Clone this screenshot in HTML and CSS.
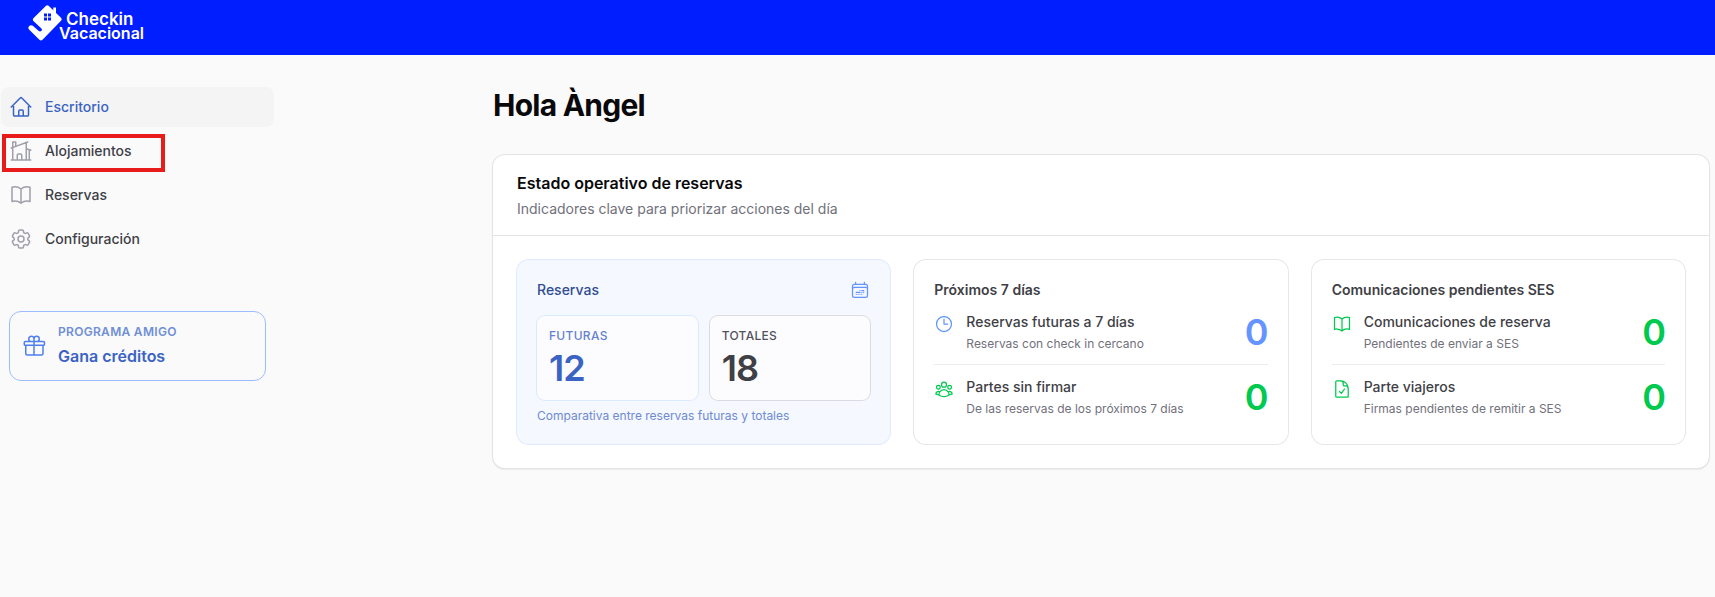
FILE: index.html
```html
<!DOCTYPE html>
<html lang="es">
<head>
  <meta charset="UTF-8">
  <meta name="viewport" content="width=device-width, initial-scale=1">
  <title>Escritorio - Checkin Vacacional</title>
  <link rel="stylesheet" href="styles.css">
</head>
<body>

<header class="topbar">
  <a href="#" class="logo">
    <svg class="logo-mark" viewBox="0 0 36 38" aria-hidden="true">
      <path d="M18 1.8Q19.300.6 20.600 1.800L25.300 6.300V3.500H28V9L33 13.800Q34.300 15.200 33 16.800L14.500 35.800Q13 37.400 11.400 35.800L1 25.600Q-.4 23.600 1.200 22Q3 20.600 4.800 21.800L10.500 26.800Q12 28 13.500 26.800Q14.500 25.600 13.400 24.400L5.400 17Q4.300 15.600 5.400 14.300Z" fill="#fff"/>
      <path d="M16 9.500h3v3h-3zM20 9.500h3v3h-3zM16 13.500h3v3h-3zM20 13.500h3v3h-3z" fill="#001eff"/>
    </svg>
    <span class="logo-text">
      <span class="logo-first">Checkin</span>
      <span>Vacacional</span>
    </span>
  </a>
</header>

<div class="layout">
  <!-- Sidebar -->
  <aside class="sidebar">
    <nav>
      <ul class="menu">
        <li>
          <a href="#" class="menu-item active">
            <svg class="icon" viewBox="0 0 24 24"><path d="m2.250 12 8.954-8.955c.44-.439 1.152-.439 1.591 0L21.750 12M4.500 9.750v10.125c0 .621.504 1.125 1.125 1.125H9.750v-4.875c0-.621.504-1.125 1.125-1.125h2.250c.621 0 1.125.504 1.125 1.125V21h4.125c.621 0 1.125-.504 1.125-1.125V9.750M8.250 21h8.250"/></svg>
            Escritorio
          </a>
        </li>
        <li class="marked">
          <a href="#" class="menu-item">
            <svg class="icon" viewBox="0 0 24 24"><path d="M8.250 21v-4.875c0-.621.504-1.125 1.125-1.125h2.250c.621 0 1.125.504 1.125 1.125V21m0 0h4.500V3.545M12.750 21h7.500V10.750M2.250 21h1.500m18 0h-18M2.250 9l4.500-1.636M18.750 3l-1.500.545m0 6.205 3 1m1.500.5-1.500-.5M6.750 7.364V3h-3v18m3-13.636 10.500-3.819"/></svg>
            Alojamientos
          </a>
        </li>
        <li>
          <a href="#" class="menu-item">
            <svg class="icon" viewBox="0 0 24 24"><path d="M12 6.042A8.967 8.967 0 0 0 6 3.750c-1.052 0-2.062.18-3 .512v14.250A8.987 8.987 0 0 1 6 18c2.305 0 4.408.867 6 2.292m0-14.250a8.966 8.966 0 0 1 6-2.292c1.052 0 2.062.18 3 .512v14.250A8.987 8.987 0 0 0 18 18a8.967 8.967 0 0 0-6 2.292m0-14.250v14.250"/></svg>
            Reservas
          </a>
        </li>
        <li>
          <a href="#" class="menu-item">
            <svg class="icon" viewBox="0 0 24 24"><path d="M9.594 3.940c.09-.542.56-.94 1.110-.94h2.593c.55 0 1.020.398 1.110.94l.213 1.281c.063.374.313.686.645.87.074.04.147.083.22.127.325.196.72.257 1.075.124l1.217-.456a1.125 1.125 0 0 1 1.370.49l1.296 2.247a1.125 1.125 0 0 1-.26 1.431l-1.003.827c-.293.241-.438.613-.43.992a7.723 7.723 0 0 1 0 .255c-.008.378.137.75.43.991l1.004.827c.424.35.534.955.26 1.430l-1.298 2.247a1.125 1.125 0 0 1-1.369.491l-1.217-.456c-.355-.133-.75-.072-1.076.124a6.470 6.470 0 0 1-.22.128c-.331.183-.581.495-.644.869l-.213 1.281c-.09.543-.56.940-1.110.940h-2.594c-.55 0-1.019-.398-1.110-.94l-.213-1.281c-.062-.374-.312-.686-.644-.87a6.520 6.520 0 0 1-.22-.127c-.325-.196-.72-.257-1.076-.124l-1.217.456a1.125 1.125 0 0 1-1.369-.49l-1.297-2.247a1.125 1.125 0 0 1 .26-1.431l1.004-.827c.292-.24.437-.613.430-.991a6.932 6.932 0 0 1 0-.255c.007-.380-.138-.751-.430-.992l-1.004-.827a1.125 1.125 0 0 1-.26-1.430l1.297-2.247a1.125 1.125 0 0 1 1.370-.491l1.216.456c.356.133.751.072 1.076-.124.072-.044.146-.086.220-.128.332-.183.582-.495.644-.869l.214-1.280Z"/><path d="M15 12a3 3 0 1 1-6 0 3 3 0 0 1 6 0Z"/></svg>
            Configuración
          </a>
        </li>
      </ul>
    </nav>

    <a href="#" class="promo">
      <svg class="icon" viewBox="0 0 24 24"><path d="M21 11.250v8.250a1.500 1.500 0 0 1-1.500 1.500H5.250a1.500 1.500 0 0 1-1.500-1.500v-8.250M12 4.875A2.625 2.625 0 1 0 9.375 7.500H12m0-2.625V7.500m0-2.625A2.625 2.625 0 1 1 14.625 7.500H12m0 0V21m-8.625-9.750h18c.621 0 1.125-.504 1.125-1.125v-1.500c0-.621-.504-1.125-1.125-1.125h-18c-.621 0-1.125.504-1.125 1.125v1.500c0 .621.504 1.125 1.125 1.125Z"/></svg>
      <span class="promo-text">
        <span class="promo-label">PROGRAMA AMIGO</span>
        <span class="promo-title">Gana créditos</span>
      </span>
    </a>
  </aside>

  <!-- Main content -->
  <main>
    <h1>Hola Àngel</h1>

    <section class="panel">
      <div class="panel-header">
        <h2>Estado operativo de reservas</h2>
        <p>Indicadores clave para priorizar acciones del día</p>
      </div>

      <div class="cards">
        <div class="card card-blue">
          <div class="card-top">
            <h3>Reservas</h3>
            <svg class="icon small" viewBox="0 0 24 24"><path d="M6.750 2.994v2.250m10.500-2.250v2.250m-14.252 13.500V7.491a2.250 2.250 0 0 1 2.250-2.250h13.500a2.250 2.250 0 0 1 2.250 2.250v11.251m-18 0a2.250 2.250 0 0 0 2.250 2.250h13.500a2.250 2.250 0 0 0 2.250-2.250m-18 0v-7.500a2.250 2.250 0 0 1 2.250-2.250h13.500a2.250 2.250 0 0 1 2.250 2.250v7.500m-6.750-6h2.250m-9 2.250h4.500m.002-2.250h.005v.006H12v-.006Zm-.001 4.500h.006v.006h-.006v-.005Zm-2.250.001h.005v.006H9.750v-.006Zm-2.250 0h.005v.005h-.006v-.005Zm6.750-2.247h.005v.005h-.005v-.005Zm0 2.247h.006v.006h-.006v-.006Zm2.250-2.248h.006V15H16.500v-.005Z"/></svg>
          </div>
          <div class="totals">
            <div class="total future">
              <span class="total-label">FUTURAS</span>
              <span class="number">12</span>
            </div>
            <div class="total">
              <span class="total-label">TOTALES</span>
              <span class="number">18</span>
            </div>
          </div>
          <p class="note">Comparativa entre reservas futuras y totales</p>
        </div>

        <div class="card">
          <h3>Próximos 7 días</h3>
          <ul class="stats">
            <li class="stat blue">
              <svg class="icon small" viewBox="0 0 24 24"><path d="M12 6v6h4.500m4.500 0a9 9 0 1 1-18 0 9 9 0 0 1 18 0Z"/></svg>
              <div class="stat-text">
                <h4>Reservas futuras a 7 días</h4>
                <p>Reservas con check in cercano</p>
              </div>
              <span class="number">0</span>
            </li>
            <li class="stat green">
              <svg class="icon small" viewBox="0 0 24 24"><path d="M18 18.720a9.094 9.094 0 0 0 3.741-.479 3 3 0 0 0-4.682-2.720m.94 3.198.001.031c0 .225-.012.447-.037.666A11.944 11.944 0 0 1 12 21c-2.170 0-4.207-.576-5.963-1.584A6.062 6.062 0 0 1 6 18.719m12 0a5.971 5.971 0 0 0-.941-3.197m0 0A5.995 5.995 0 0 0 12 12.750a5.995 5.995 0 0 0-5.058 2.772m0 0a3 3 0 0 0-4.681 2.720 8.986 8.986 0 0 0 3.740.477m.94-3.197a5.971 5.971 0 0 0-.94 3.197M15 6.750a3 3 0 1 1-6 0 3 3 0 0 1 6 0Zm6 3a2.250 2.250 0 1 1-4.500 0 2.250 2.250 0 0 1 4.500 0Zm-13.500 0a2.250 2.250 0 1 1-4.500 0 2.250 2.250 0 0 1 4.500 0Z"/></svg>
              <div class="stat-text">
                <h4>Partes sin firmar</h4>
                <p>De las reservas de los próximos 7 días</p>
              </div>
              <span class="number">0</span>
            </li>
          </ul>
        </div>

        <div class="card">
          <h3>Comunicaciones pendientes SES</h3>
          <ul class="stats">
            <li class="stat green">
              <svg class="icon small" viewBox="0 0 24 24"><path d="M12 6.042A8.967 8.967 0 0 0 6 3.750c-1.052 0-2.062.18-3 .512v14.250A8.987 8.987 0 0 1 6 18c2.305 0 4.408.867 6 2.292m0-14.250a8.966 8.966 0 0 1 6-2.292c1.052 0 2.062.18 3 .512v14.250A8.987 8.987 0 0 0 18 18a8.967 8.967 0 0 0-6 2.292m0-14.250v14.250"/></svg>
              <div class="stat-text">
                <h4>Comunicaciones de reserva</h4>
                <p>Pendientes de enviar a SES</p>
              </div>
              <span class="number">0</span>
            </li>
            <li class="stat green">
              <svg class="icon small" viewBox="0 0 24 24"><path d="M10.125 2.250h-4.500c-.621 0-1.125.504-1.125 1.125v17.250c0 .621.504 1.125 1.125 1.125h12.750c.621 0 1.125-.504 1.125-1.125v-9M10.125 2.250h.375a9 9 0 0 1 9 9v.375M10.125 2.250A3.375 3.375 0 0 1 13.500 5.625v1.500c0 .621.504 1.125 1.125 1.125h1.500a3.375 3.375 0 0 1 3.375 3.375M9 15l2.250 2.250L15 12"/></svg>
              <div class="stat-text">
                <h4>Parte viajeros</h4>
                <p>Firmas pendientes de remitir a SES</p>
              </div>
              <span class="number">0</span>
            </li>
          </ul>
        </div>
      </div>
    </section>
  </main>
</div>

</body>
</html>
```
FILE: styles.css
```css
* {
  box-sizing: border-box;
}

body {
  margin: 0;
  font-family: Inter, sans-serif;
  font-size: 14px;
  line-height: 20px;
  background-color: #fafafa;
  color: #3f3f46;
}

h1, h2, h3, h4, p, ul {
  margin: 0;
  padding: 0;
}

ul {
  list-style: none;
}

a {
  text-decoration: none;
}

.icon {
  width: 24px;
  height: 24px;
  flex-shrink: 0;
  fill: none;
  stroke: #9f9fa9;
  stroke-width: 1.5;
  stroke-linecap: round;
  stroke-linejoin: round;
}

.icon.small {
  width: 20px;
  height: 20px;
}

/* Top bar */
.topbar {
  display: flex;
  height: 55px;
  padding: 4px 28px;
  background-color: #001eff;
}

.logo {
  display: flex;
  color: white;
}

.logo-mark {
  width: 36px;
  height: 38px;
  fill: none;
}

.logo-text {
  display: flex;
  flex-direction: column;
  margin-left: -5px;
  padding-top: 8px;
  font-size: 16px;
  font-weight: 600;
  line-height: 14px;
}

.logo-first {
  padding-left: 7px;
  font-size: 17px;
}

.layout {
  display: grid;
  grid-template-columns: 273px minmax(0, 1fr);
  gap: 219px;
  padding: 32px 6px 32px 1px;
}

/* Sidebar */
.menu {
  display: flex;
  flex-direction: column;
  gap: 4px;
}

.menu-item {
  display: flex;
  align-items: center;
  gap: 12px;
  padding: 8px;
  line-height: 24px;
  font-weight: 500;
  color: #3f3f46;
  border-radius: 8px;
}

.menu-item.active {
  background-color: #f4f4f4;
  color: #3b63c4;
}

.menu-item.active .icon {
  stroke: #3b63c4;
}

.marked {
  position: relative;
}

.marked::after {
  content: "";
  box-sizing: border-box;
  position: absolute;
  top: 3px;
  left: 1px;
  width: 163px;
  height: 38px;
  border: 4px solid #e91c1c;
  pointer-events: none;
}

.promo {
  display: flex;
  align-items: center;
  gap: 12px;
  margin: 52px 8px 0;
  padding: 12px;
  border: 1px solid #9dbcff;
  border-radius: 12px;
  color: #3b63c4;
}

.promo .icon {
  stroke: #4f7fee;
}

.promo-text {
  display: flex;
  flex-direction: column;
  gap: 4px;
}

.promo-label {
  font-size: 12px;
  line-height: 16px;
  font-weight: 600;
  letter-spacing: 0.3px;
  color: #6f8fd6;
}

.promo-title {
  font-size: 16px;
  line-height: 24px;
  font-weight: 600;
}

/* Main */
h1 {
  margin-bottom: 32px;
  font-size: 30px;
  line-height: 36px;
  font-weight: 700;
  letter-spacing: -0.75px;
  color: #09090b;
}

.panel {
  background-color: white;
  border-radius: 12px;
  box-shadow: 0 0 0 1px #e4e4e7, 0 1px 2px rgba(0, 0, 0, 0.2);
}

.panel-header {
  padding: 16px 24px;
  border-bottom: 1px solid #e4e4e7;
}

.panel-header h2 {
  margin-bottom: 4px;
  font-size: 16px;
  line-height: 24px;
  font-weight: 600;
  color: #09090b;
}

.panel-header p {
  color: #71717b;
}

.cards {
  display: grid;
  grid-template-columns: repeat(3, minmax(0, 1fr));
  gap: 24px;
  padding: 24px;
}

.card {
  padding: 20px;
  border-radius: 12px;
  box-shadow: 0 0 0 1px #e7e7e9;
}

.card h3 {
  font-size: 14px;
  font-weight: 600;
}

.number {
  font-size: 36px;
  line-height: 40px;
  font-weight: 600;
  letter-spacing: -0.9px;
}

.card-blue {
  background-color: #f5f8ff;
  box-shadow: 0 0 0 1px #dfeaff;
}

.card-blue h3 {
  font-weight: 500;
  color: #324d92;
}

.card-blue .icon {
  stroke: #6494ff;
}

.card-top {
  display: flex;
  justify-content: space-between;
}

.totals {
  display: grid;
  grid-template-columns: 1fr 1fr;
  gap: 12px;
  margin-top: 16px;
}

.total {
  display: flex;
  flex-direction: column;
  gap: 4px;
  padding: 12px;
  background-color: #fcfcfe;
  border-radius: 8px;
  box-shadow: 0 0 0 1px #dcdce0;
}

.total-label {
  font-size: 12px;
  line-height: 16px;
  font-weight: 500;
  letter-spacing: 0.3px;
  color: #52525c;
}

.total.future {
  box-shadow: 0 0 0 1px #dbe9ff;
}

.future .total-label {
  color: #6581cc;
}

.future .number {
  color: #3b63c4;
}

.note {
  margin-top: 8px;
  font-size: 12px;
  line-height: 16px;
  color: #6f8ad0;
}

.stats {
  margin-top: 12px;
}

.stat {
  display: flex;
  gap: 12px;
}

.stat + .stat {
  margin-top: 12px;
  padding-top: 12px;
  border-top: 1px solid #ececee;
}

.stat .icon {
  margin-top: 2px;
}

.stat-text {
  flex: 1;
}

.stat h4 {
  margin-bottom: 4px;
  font-size: 14px;
  font-weight: 500;
}

.stat p {
  font-size: 12px;
  line-height: 16px;
  color: #71717b;
}

.stat.blue .icon {
  stroke: #6494ff;
}

.stat.blue .number {
  color: #6494ff;
}

.stat.green .icon {
  stroke: #00c950;
}

.stat.green .number {
  color: #00c950;
}

@media (max-width: 1200px) {
  .layout {
    gap: 24px;
  }

  .cards {
    grid-template-columns: 1fr;
  }
}
```
